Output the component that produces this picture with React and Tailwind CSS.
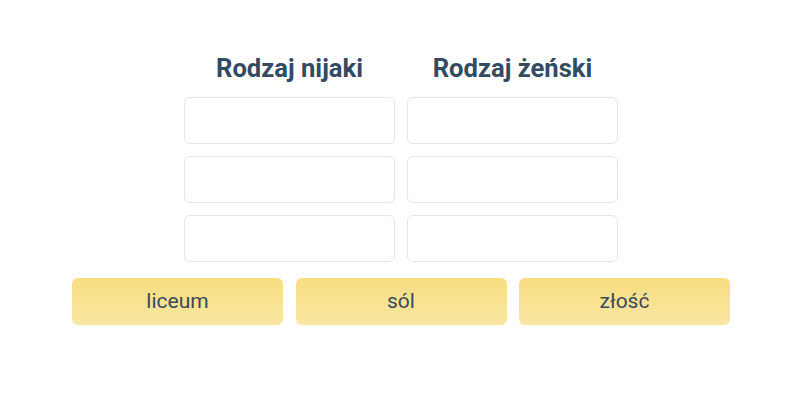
export default function App() {
  const rows = [0, 1, 2];
  const words = ["liceum", "sól", "złość"];

  return (
    <div className="w-[800px] h-[400px] bg-white font-['Roboto',sans-serif] flex flex-col items-center pt-[52px] pl-[2px]">
      <div className="grid grid-cols-[211px_211px] gap-x-3">
        <div className="text-center text-[25.6px] leading-8 font-bold text-[#334a63]">Rodzaj nijaki</div>
        <div className="text-center text-[25.6px] leading-8 font-bold text-[#334a63]">Rodzaj żeński</div>
      </div>
      <div className="mt-[13px] grid grid-cols-[211px_211px] gap-x-3 gap-y-3">
        {rows.map((r) => (
          <>
            <div key={"a" + r} className="h-[47px] rounded-md border border-[#e2e6ea] bg-white" />
            <div key={"b" + r} className="h-[47px] rounded-md border border-[#e2e6ea] bg-white" />
          </>
        ))}
      </div>
      <div className="mt-[16px] flex gap-[12.5px]">
        {words.map((w) => (
          <div
            key={w}
            className="w-[211px] h-[47px] rounded-md bg-gradient-to-b from-[#f8dd80] to-[#f9e6a2] flex items-center justify-center text-[21px] text-[#3a4a5c]"
          >
            {w}
          </div>
        ))}
      </div>
    </div>
  );
}
